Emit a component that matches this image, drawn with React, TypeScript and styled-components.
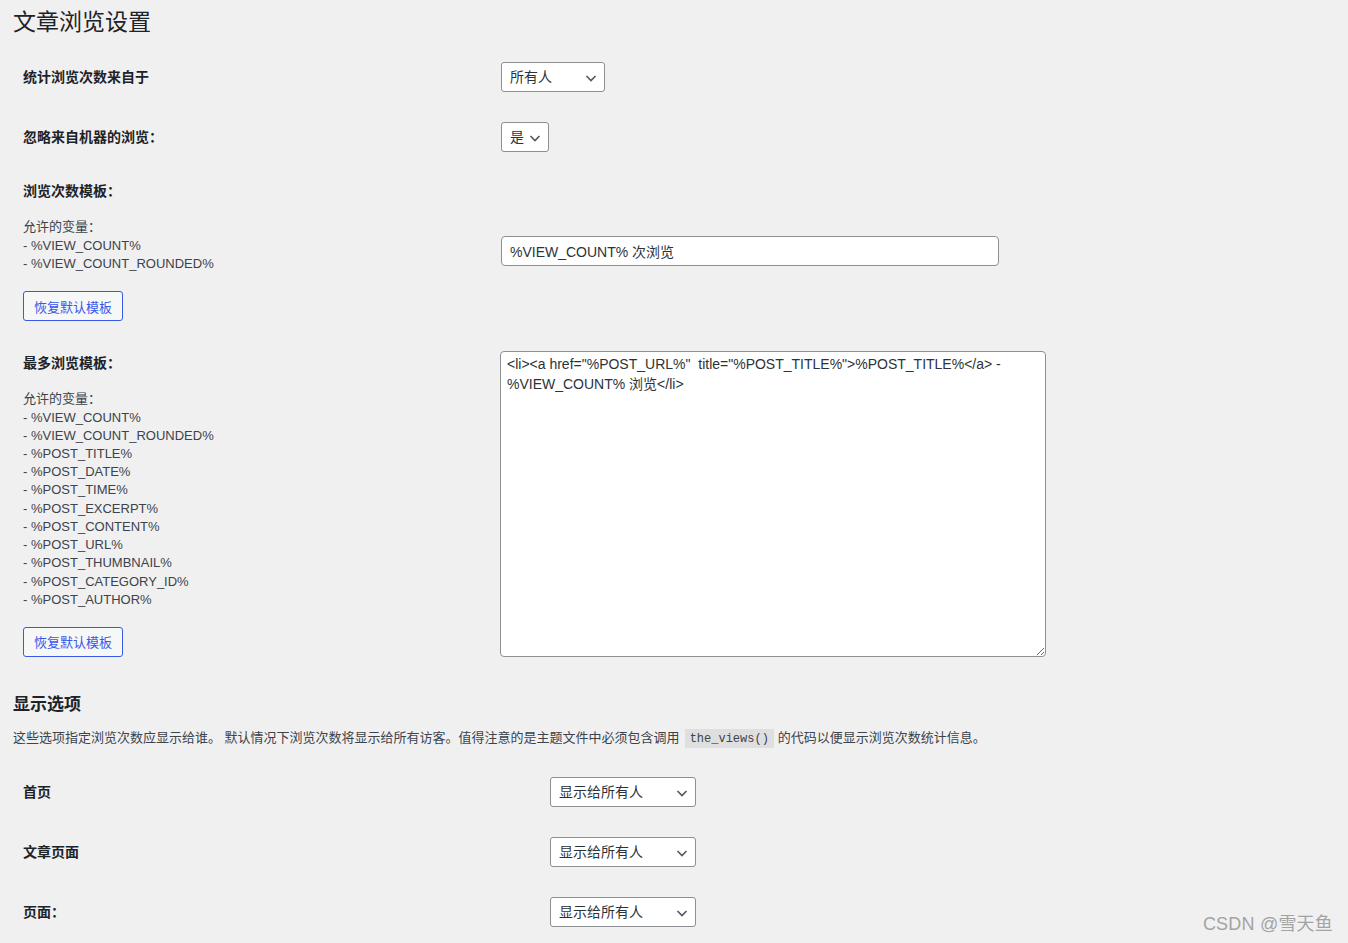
import React from "react";
import styled, { createGlobalStyle } from "styled-components";

const SANS = `"Liberation Sans", "Noto Sans CJK SC", sans-serif`;

const GlobalStyle = createGlobalStyle`
  html, body {
    margin: 0;
    padding: 0;
    background: #f0f0f1;
  }
  body {
    font-family: ${SANS};
    font-size: 13px;
    color: #3c434a;
  }
`;

const Page = styled.div`
  position: relative;
  min-height: 943px;
  padding: 7px 0 0 13px;
  box-sizing: border-box;
`;

const Title = styled.h1`
  margin: 0;
  font-size: 23px;
  line-height: 30px;
  font-weight: 400;
  color: #1d2327;
`;

const SectionTitle = styled.h2`
  margin: 22px 0 0;
  font-size: 17px;
  line-height: 22px;
  font-weight: 700;
  color: #1d2327;
`;

const Description = styled.p`
  margin: 13px 0 0;
  font-size: 13px;
  line-height: 18.2px;
  color: #3c434a;
`;

const Code = styled.code`
  margin: 0 4px 0 5px;
  padding: 3px 5px 2px;
  background: rgba(0, 0, 0, 0.07);
  font-family: "Liberation Mono", monospace;
  font-size: 12px;
  color: #3c434a;
`;

const FormTable = styled.div<{ $top: number }>`
  display: flex;
  flex-direction: column;
  margin-top: ${(p) => p.$top}px;
  padding-left: 10px;
`;

const Row = styled.div`
  display: flex;
  align-items: center;
`;

const LabelCell = styled.div<{ $width: number; $padTop?: number }>`
  width: ${(p) => p.$width}px;
  flex: none;
  padding: ${(p) => p.$padTop ?? 15}px 0 15px;
  box-sizing: border-box;
  display: flex;
  flex-direction: column;
  align-items: flex-start;
`;

const FieldCell = styled.div`
  padding: 15px 0;
  display: flex;
`;

const Label = styled.div`
  font-size: 14px;
  line-height: 18.2px;
  font-weight: 700;
  color: #1d2327;
`;

const VarList = styled.div`
  margin-top: 18.2px;
  font-size: 13px;
  line-height: 18.2px;
  color: #3c434a;
`;

const ResetButton = styled.button`
  margin-top: 18px;
  width: 100px;
  height: 30px;
  padding: 0 10px;
  border: 1px solid #3858e9;
  border-radius: 3px;
  background: #f6f7f7;
  color: #3858e9;
  font-family: ${SANS};
  font-size: 13px;
  cursor: pointer;
`;

const SelectBox = styled.div<{ $width: number }>`
  position: relative;
  box-sizing: border-box;
  width: ${(p) => p.$width}px;
  height: 30px;
  padding: 0 24px 0 8px;
  border: 1px solid #8c8f94;
  border-radius: 3px;
  background: #fff;
  color: #2c3338;
  font-size: 14px;
  line-height: 28px;
  white-space: nowrap;
`;

const Chevron = styled.svg`
  position: absolute;
  right: 5px;
  top: 7px;
  width: 16px;
  height: 16px;
`;

const TextInput = styled.input`
  box-sizing: border-box;
  width: 498px;
  height: 30px;
  margin-top: -2px;
  padding: 0 8px;
  border: 1px solid #8c8f94;
  border-radius: 4px;
  background: #fff;
  color: #2c3338;
  font-family: ${SANS};
  font-size: 14px;
  outline: none;
`;

const TextArea = styled.textarea`
  box-sizing: border-box;
  width: 546px;
  height: 306px;
  margin-left: -1px;
  padding: 2px 6px;
  border: 1px solid #8c8f94;
  border-radius: 4px;
  background: #fff;
  color: #2c3338;
  font-family: ${SANS};
  font-size: 14px;
  line-height: 20px;
  outline: none;
  resize: both;
`;

const Watermark = styled.div`
  position: absolute;
  right: 15px;
  bottom: 8px;
  font-family: ${SANS};
  font-size: 18px;
  color: #a3a3a3;
  letter-spacing: 0.2px;
`;

const Select = ({ value, width }: { value: string; width: number }) => (
  <SelectBox $width={width}>
    {value}
    <Chevron viewBox="0 0 16 16">
      <polyline
        points="3.5,6 8,10.5 12.5,6"
        fill="none"
        stroke="#50575e"
        strokeWidth="1.6"
      />
    </Chevron>
  </SelectBox>
);

const baseVars = ["%VIEW_COUNT%", "%VIEW_COUNT_ROUNDED%"];
const postVars = [
  ...baseVars,
  "%POST_TITLE%",
  "%POST_DATE%",
  "%POST_TIME%",
  "%POST_EXCERPT%",
  "%POST_CONTENT%",
  "%POST_URL%",
  "%POST_THUMBNAIL%",
  "%POST_CATEGORY_ID%",
  "%POST_AUTHOR%",
];

const Vars = ({ items }: { items: string[] }) => (
  <VarList>
    允许的变量：
    {items.map((v) => (
      <div key={v}>- {v}</div>
    ))}
  </VarList>
);

const displayRows = ["首页", "文章页面", "页面："];

export default function App() {
  return (
    <Page>
      <GlobalStyle />
      <Title>文章浏览设置</Title>

      <FormTable $top={10}>
        <Row>
          <LabelCell $width={478}>
            <Label>统计浏览次数来自于</Label>
          </LabelCell>
          <FieldCell>
            <Select value="所有人" width={104} />
          </FieldCell>
        </Row>
        <Row>
          <LabelCell $width={478}>
            <Label>忽略来自机器的浏览：</Label>
          </LabelCell>
          <FieldCell>
            <Select value="是" width={48} />
          </FieldCell>
        </Row>
        <Row>
          <LabelCell $width={478}>
            <Label>浏览次数模板：</Label>
            <Vars items={baseVars} />
            <ResetButton>恢复默认模板</ResetButton>
          </LabelCell>
          <FieldCell>
            <TextInput defaultValue="%VIEW_COUNT% 次浏览" />
          </FieldCell>
        </Row>
        <Row>
          <LabelCell $width={478} $padTop={18}>
            <Label>最多浏览模板：</Label>
            <Vars items={postVars} />
            <ResetButton>恢复默认模板</ResetButton>
          </LabelCell>
          <FieldCell>
            <TextArea
              defaultValue={
                '<li><a href="%POST_URL%"  title="%POST_TITLE%">%POST_TITLE%</a> -\n%VIEW_COUNT% 浏览</li>'
              }
            />
          </FieldCell>
        </Row>
      </FormTable>

      <SectionTitle>显示选项</SectionTitle>
      <Description>
        这些选项指定浏览次数应显示给谁。 默认情况下浏览次数将显示给所有访客。值得注意的是主题文件中必须包含调用
        <Code>the_views()</Code>
        的代码以便显示浏览次数统计信息。
      </Description>

      <FormTable $top={14}>
        {displayRows.map((label) => (
          <Row key={label}>
            <LabelCell $width={527}>
              <Label>{label}</Label>
            </LabelCell>
            <FieldCell>
              <Select value="显示给所有人" width={146} />
            </FieldCell>
          </Row>
        ))}
      </FormTable>

      <Watermark>CSDN @雪天鱼</Watermark>
    </Page>
  );
}
